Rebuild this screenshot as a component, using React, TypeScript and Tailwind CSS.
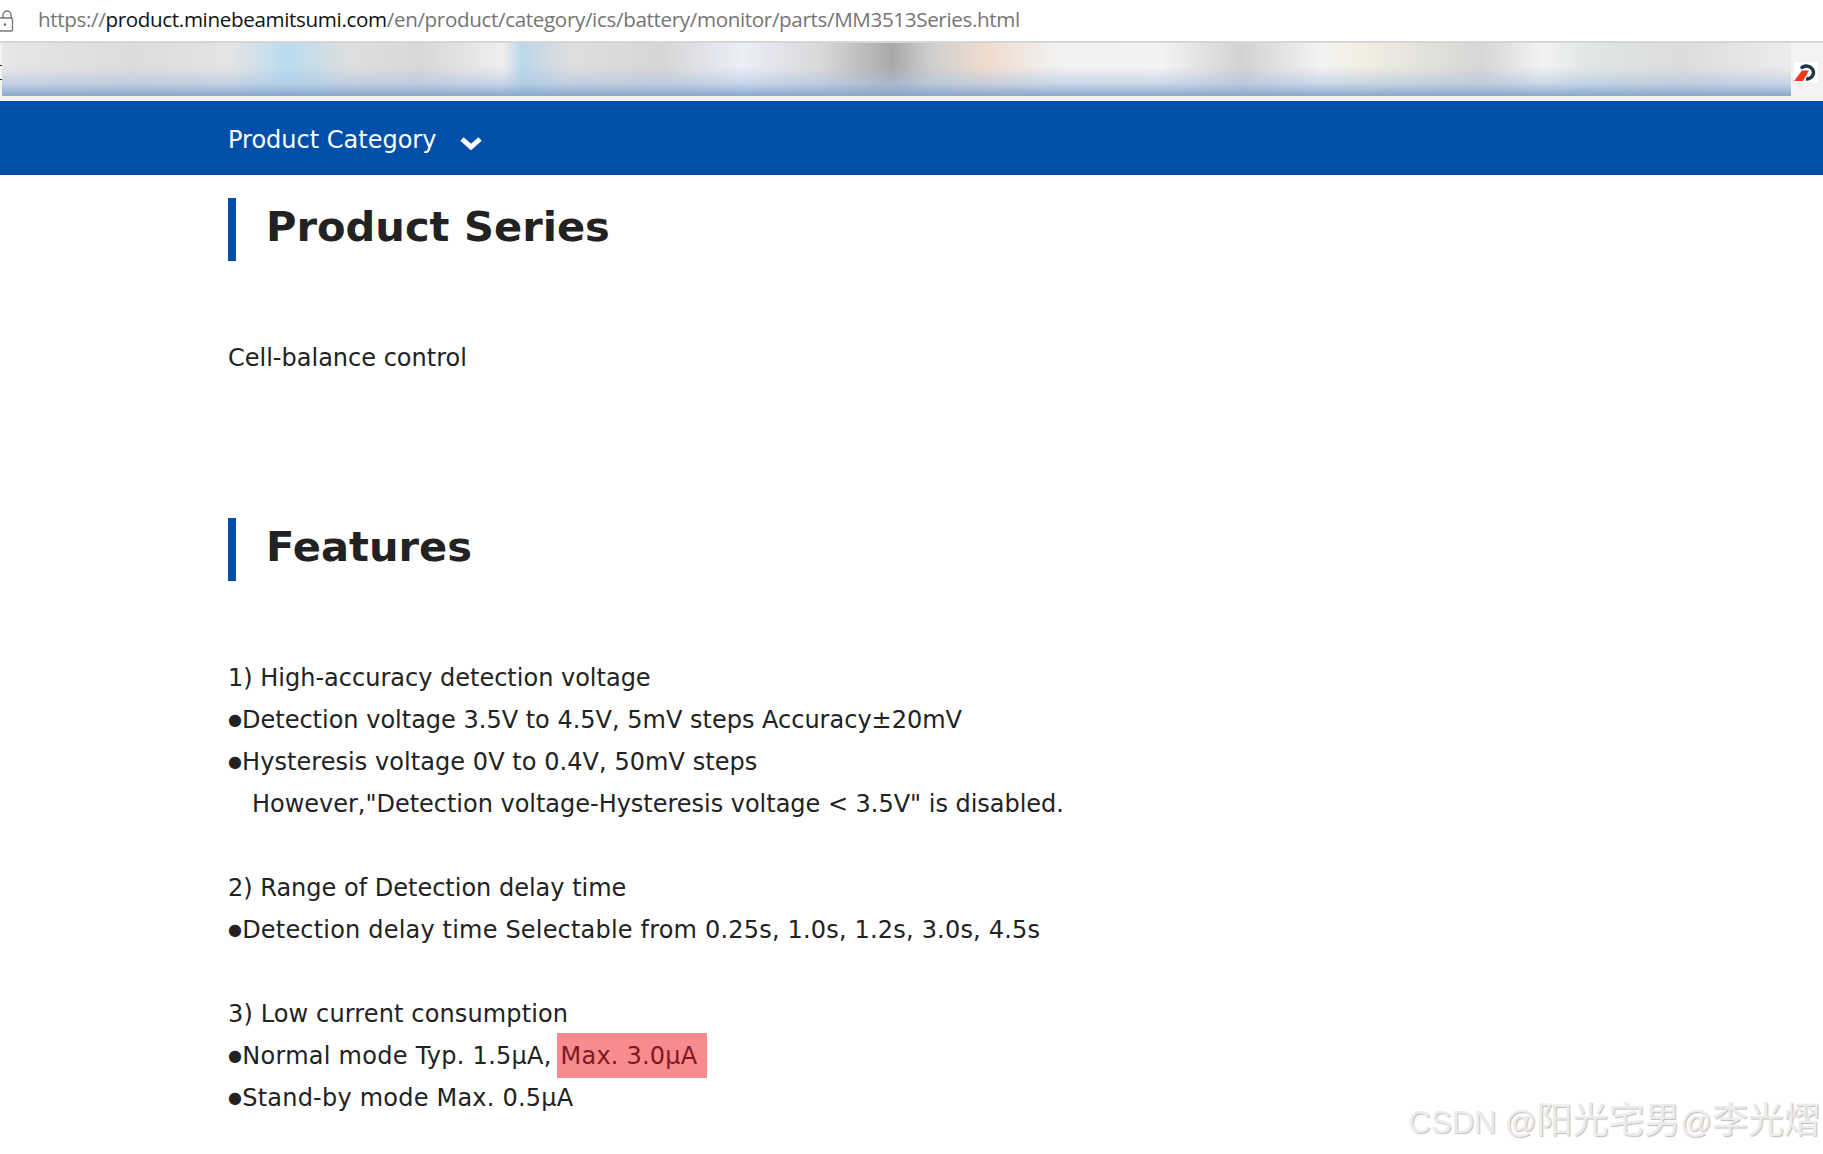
const FONT = "font-['DejaVu_Sans',Verdana,sans-serif]";

function LockIcon() {
  return (
    <svg viewBox="0 0 14 22" className="h-[22px] w-[14px] shrink-0" fill="none" aria-hidden="true">
      <path d="M3 8V5a4 4 0 0 1 8 0v3" stroke="#777" strokeWidth="1.4" />
      <rect x="-1" y="8" width="13.5" height="13" rx="1.5" stroke="#777" strokeWidth="1.4" />
      <circle cx="5" cy="14.5" r="1.2" fill="#666" />
    </svg>
  );
}

function BrandMark() {
  return (
    <svg viewBox="0 0 24 20" className="h-5 w-6" aria-hidden="true">
      <rect width="24" height="20" fill="#fff" />
      <path d="M7 6.5A7 6.5 0 1 1 12 17" fill="none" stroke="#1d3a42" strokeWidth="3.4" />
      <path d="M0 19 8 8.5h7L9 19z" fill="#f0391c" />
    </svg>
  );
}

function SectionHeading({ children }: { children: string }) {
  return (
    <h2 className="flex h-[63px] items-center border-l-8 border-[#0050aa] pb-[5px] pl-[30px] text-[41.6px] leading-none font-bold text-[#222]">
      {children}
    </h2>
  );
}

function Line({ children, className = "" }: { children: React.ReactNode; className?: string }) {
  return <p className={`h-[42px] leading-[42px] whitespace-pre ${className}`}>{children}</p>;
}

function Dot() {
  return <span className="align-[3px] text-[16px]">●</span>;
}

export default function App() {
  return (
    <div className={`relative h-[1154px] w-full overflow-hidden bg-white ${FONT}`}>
      {/* address bar */}
      <div className="flex h-[43px] items-center border-b-2 border-[#d6d6d6]">
        <LockIcon />
        <div className="ml-6 pb-0.5 font-['Open_Sans',sans-serif] text-[20.6px] tracking-[-0.35px] text-[#757575]">
          https://<span className="text-[#111]">product.minebeamitsumi.com</span>
          /en/product/category/ics/battery/monitor/parts/MM3513Series.html
        </div>
      </div>

      {/* blurred toolbar */}
      <div className="relative flex h-[58px] items-start bg-[#f3f3f3]">
        <div className="absolute top-[22px] left-0 h-px w-0.5 bg-[#222]" />
        <div className="absolute top-9 left-0 h-px w-0.5 bg-[#222]" />
        <div className="ml-0.5 h-[53px] w-[1789px] overflow-hidden bg-[linear-gradient(90deg,#e6e6e6_0px,#dcdcdc_130px,#e4e4e4_230px,#b9dcf0_285px,#dedede_350px,#d8d8d8_420px,#eeeeee_500px,#bcd6ea_520px,#dedede_570px,#d6d6d6_660px,#eceef8_740px,#d8d8d8_820px,#a9a9a9_890px,#cfcfcf_930px,#f0dccf_985px,#f2f2f2_1060px,#f3f3f3_1160px,#d2d2d2_1240px,#f3f3f3_1320px,#f2efe2_1355px,#d6d6d6_1480px,#f2f2f2_1540px,#dfe6e4_1590px,#dcdcdc_1680px,#ececec_1789px)]">
          <div className="h-full w-full bg-[linear-gradient(180deg,rgba(255,255,255,0)_45%,rgba(170,195,225,0.55)_76%,rgba(135,165,205,0.95)_100%)]" />
        </div>
        <div className="mt-[19px] ml-[3px]">
          <BrandMark />
        </div>
      </div>

      {/* nav */}
      <div className="flex h-[74px] items-center bg-[#0050aa] pl-[228px] text-[24px] text-white">
        <span className="pt-1">Product Category</span>
        <svg viewBox="0 0 24 14" className="mt-[9px] ml-[23px] h-[14px] w-6" aria-hidden="true">
          <path d="M3 3l9 8 9-8" fill="none" stroke="#fff" strokeWidth="5" />
        </svg>
      </div>

      {/* content */}
      <main className="pl-[228px] text-[24px] text-[#222]">
        <div className="pt-[23px]">
          <SectionHeading>Product Series</SectionHeading>
        </div>
        <p className="mt-[76px] leading-[42px]">Cell-balance control</p>
        <div className="mt-[139px]">
          <SectionHeading>Features</SectionHeading>
        </div>
        <div className="mt-[76px]">
          <Line>1) High-accuracy detection voltage</Line>
          <Line>
            <Dot />Detection voltage 3.5V to 4.5V, 5mV steps Accuracy±20mV
          </Line>
          <Line className="tracking-[0.06px]">
            <Dot />Hysteresis voltage 0V to 0.4V, 50mV steps
          </Line>
          <Line className="pl-6 tracking-[-0.02px]">However,"Detection voltage-Hysteresis voltage &lt; 3.5V" is disabled.</Line>
          <div className="h-[42px]" />
          <Line>2) Range of Detection delay time</Line>
          <Line className="tracking-[0.19px]">
            <Dot />Detection delay time Selectable from 0.25s, 1.0s, 1.2s, 3.0s, 4.5s
          </Line>
          <div className="h-[42px]" />
          <Line className="tracking-[0.13px]">3) Low current consumption</Line>
          <Line className="tracking-[0.27px]">
            <Dot />Normal mode Typ. 1.5μA,{" "}
            <span className="-ml-[3px] bg-[#f78b8f] pt-[9px] pr-[10px] pb-2 pl-1 tracking-[0.2px] text-[#7d1a20]">Max. 3.0μA</span>
          </Line>
          <Line className="tracking-[0.22px]">
            <Dot />Stand-by mode Max. 0.5μA
          </Line>
        </div>
      </main>

      {/* watermark */}
      <div className="absolute right-[3px] bottom-[15px] font-['Liberation_Sans','Noto_Sans_CJK_SC',sans-serif] text-[31px] leading-none text-[#ececec] [text-shadow:1px_1px_1px_#bdbdbd]">
        CSDN @<span className="text-[36px]">阳光宅男</span>@<span className="text-[36px]">李光熠</span>
      </div>
    </div>
  );
}
